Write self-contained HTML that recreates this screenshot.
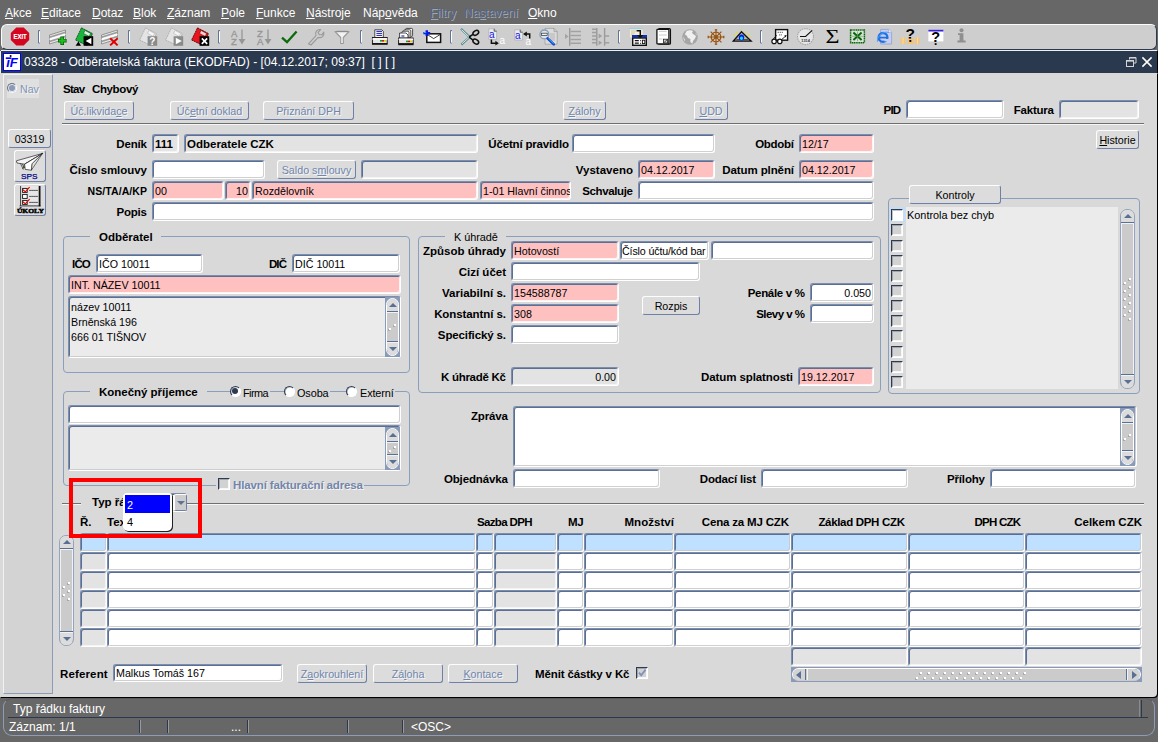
<!DOCTYPE html><html lang="cs"><head><meta charset="utf-8"><title>03328 - Odběratelská faktura</title><style>
html,body{margin:0;padding:0}
body{width:1158px;height:742px;overflow:hidden;background:#676767;position:relative;
 font-family:"Liberation Sans",Arial,sans-serif;font-size:12px;color:#000}
div,span{box-sizing:border-box}
.a{position:absolute;white-space:nowrap}
.menu{top:6px;font-size:12px;color:#fff;line-height:15px}
.menu u{text-decoration-thickness:1px;text-underline-offset:1px}
.menu.dis{color:#52648a;text-shadow:1px 1px 0 #a6a6a6}
.tb{left:1px;top:24px;width:1156px;height:26px;background:#cecece;border-radius:6px;border:1px solid;border-color:#fcfcfc #2b394f #2b394f #fcfcfc}
.sep{width:2px;height:13px;top:31px;border-left:1px solid #7d8fb3;border-right:1px solid #fff}
.title{left:1px;top:51px;width:1156px;height:22px;background:#2b394f;box-shadow:1px 0 0 #000, 0 -1px 0 #f0f0f0, -1px 0 0 #f0f0f0}
.ttext{left:24px;top:55px;color:#fff;font-size:12.1px;line-height:15px}
.win{left:0;top:73px;width:1157px;height:624px;background:#d9d9d9;box-shadow:1px 1px 0 #000;border-radius:0 0 4px 0}
.side{left:3px;top:74px;width:50px;height:620px;background:#d3d3d3;border-left:1px solid #f2f2f2;border-top:1px solid #f2f2f2;border-right:1px solid #8c9bb8;border-bottom:1px solid #8c9bb8}
.f{height:19px;border:1px solid;border-color:#7c8dad #fff #fff #7c8dad;border-radius:3px;
 box-shadow:inset 1px 1px 0 #5a6f94, inset -1px -1px 0 rgba(200,200,200,.85);font-size:10.7px;line-height:18px;padding:0 2px 0 2px;overflow:hidden;background:#fff}
.f.p{background:#ffc0c0;box-shadow:inset 1px 1px 0 #5a6f94, inset -1px -1px 0 rgba(255,255,255,.8)}
.f.g{background:#e3e3e3;box-shadow:inset 1px 1px 0 #5a6f94, inset -1px -1px 0 rgba(255,255,255,.6)}
.f.b{font-weight:bold;font-size:11.5px}
.f.r{text-align:right;padding-right:2px}
.f.cl{padding-left:1px;letter-spacing:-.15px}
.ta{border:1px solid;border-color:#7c8dad #fff #fff #7c8dad;border-radius:3px;
 box-shadow:inset 1px 1px 0 #5a6f94, inset -1px -1px 0 rgba(200,200,200,.85);font-size:10.7px;line-height:15px;padding:3px 2px 0 2px;overflow:hidden;background:#ebebeb}
.l{font-weight:bold;font-size:11.5px;line-height:14px}
.lr{text-align:right}
.btn{height:18px;border:1px solid;border-color:#fdfdfd #6e80a5 #6e80a5 #fdfdfd;border-radius:3px;background:#dcdcdc;
 font-size:10.7px;line-height:16px;text-align:center;color:#000}
.btn{padding-top:1px}
.btn.dis{color:#7086ad;text-shadow:1px 1px 0 #f6f6f6}
.grp{border:1px solid #8a9ebd;border-radius:4px}
.leg{background:#d9d9d9;line-height:15px;padding:0 8px}
.hl{height:2px;border-top:1px solid #6f6f6f;border-bottom:1px solid #f6f6f6}
.cb{width:12px;height:12px;border:1px solid;border-color:#2d3a52 #fff #fff #2d3a52;box-shadow:inset 1px 1px 0 rgba(45,58,82,.3), inset -1px -1px 0 rgba(255,255,255,.8);background:#d2d2d2}
.radio{width:11px;height:11px;border-radius:50%;border:1px solid;border-color:#2d3a52 #fff #fff #2d3a52;background:#fff;box-shadow:inset .5px .5px 0 rgba(45,58,82,.45)}
.sb{background:#cacaca;border-radius:7px;border:1px solid #8c9bb8}
.sbb{width:14px;height:14px;border-radius:7px;border:1px solid #8c9bb8;background:#e2e2e2;left:-1px}
.tri{width:0;height:0;border-left:4px solid transparent;border-right:4px solid transparent}
.st{color:#fff;font-size:12px;line-height:14px}
</style></head><body>
<div class="a menu " style="left:5px"><u>A</u>kce</div>
<div class="a menu " style="left:41px"><u>E</u>ditace</div>
<div class="a menu " style="left:92px"><u>D</u>otaz</div>
<div class="a menu " style="left:133px"><u>B</u>lok</div>
<div class="a menu " style="left:167px"><u>Z</u>áznam</div>
<div class="a menu " style="left:221px"><u>P</u>ole</div>
<div class="a menu " style="left:256px"><u>F</u>unkce</div>
<div class="a menu " style="left:306px"><u>N</u>ástroje</div>
<div class="a menu " style="left:363px">Náp<u>o</u>věda</div>
<div class="a menu dis" style="left:430px"><u>F</u>iltry</div>
<div class="a menu dis" style="left:464px">Na<u>s</u>tavení</div>
<div class="a menu " style="left:528px"><u>O</u>kno</div>
<div class="a tb"></div>
<svg class="a" style="left:0;top:24px" width="1158" height="26" viewBox="0 24 1158 26"><polygon points="16.3,27.6 23.7,27.6 29.2,33.1 29.2,40.1 23.7,45.5 16.3,45.5 10.8,40.1 10.8,33.1" fill="#d4061f"/><text x="20.1" y="39.1" font-size="6.8" font-weight="bold" fill="#fff" stroke="#fff" stroke-width="0.15" text-anchor="middle" font-family="Liberation Sans,Arial,sans-serif" textLength="13.4" lengthAdjust="spacingAndGlyphs">EXIT</text><path d="M40,30.5 H38.5 V43 H40" fill="none" stroke="#5f7499" stroke-width="1"/><path d="M39.5,31.5 V42.5" stroke="#fff" stroke-width="1"/><g transform="translate(49,27)"><polygon points="0.5,8 16.5,3 16.5,12 0.5,17" fill="#e9e9e9" stroke="#8a8a8a" stroke-width="0.9"/><path d="M0.5,10.2 L16.5,5.2 M0.5,14.6 L16.5,9.6" stroke="#9a9a9a" stroke-width="1.6" fill="none"/><path d="M0.5,12.4 L16.5,7.4" stroke="#fff" stroke-width="1.4" fill="none"/><path d="M13.2,9.5 V18 M9,13.7 H17.6" stroke="#0a5a0a" stroke-width="3.6"/><path d="M13.2,10.2 V17.3 M9.7,13.7 H16.9" stroke="#19c119" stroke-width="2.2"/></g><g transform="translate(75,27)"><polygon points="6.5,0.8 17.5,6.6 12,18.5 0.6,13" fill="#19b43c" stroke="#0a3d14" stroke-width="0.8" stroke-dasharray="2 0.6"/><polygon points="10,3.4 15.6,6.4 14.2,9.4 8.6,6.4" fill="#d9f2dd" stroke="#0a3d14" stroke-width="0.5"/><rect x="8.6" y="9.2" width="9.6" height="9.6" fill="#000"/><polygon points="16.4,10.8 16.4,17.2 10.6,14" fill="#fff"/><polygon points="0.6,18.8 3.4,14.4 6,18.8" fill="#000"/></g><g transform="translate(101,27)"><polygon points="0.5,8 16.5,3 16.5,12 0.5,17" fill="#e9e9e9" stroke="#8a8a8a" stroke-width="0.9"/><path d="M0.5,10.2 L16.5,5.2 M0.5,14.6 L16.5,9.6" stroke="#9a9a9a" stroke-width="1.6" fill="none"/><path d="M0.5,12.4 L16.5,7.4" stroke="#fff" stroke-width="1.4" fill="none"/><path d="M9.2,11.2 L16.6,18.4 M16.6,11.2 L9.2,18.4" stroke="#e00000" stroke-width="2"/></g><path d="M130,30.5 H128.5 V43 H130" fill="none" stroke="#5f7499" stroke-width="1"/><path d="M129.5,31.5 V42.5" stroke="#fff" stroke-width="1"/><g transform="translate(139,27)"><polygon points="6.5,0.8 17.5,6.6 12,18.5 0.6,13" fill="#e4e4e4" stroke="#a8a8a8" stroke-width="0.8" stroke-dasharray="2 0.6"/><polygon points="10,3.4 15.6,6.4 14.2,9.4 8.6,6.4" fill="#f6f6f6" stroke="#a8a8a8" stroke-width="0.5"/><rect x="8.6" y="9.2" width="9.6" height="9.6" fill="#8a8a8a"/><text x="13.4" y="17.7" font-size="10" font-weight="bold" fill="#fff" text-anchor="middle" font-family="Liberation Sans,Arial,sans-serif">?</text></g><g transform="translate(165,27)"><polygon points="6.5,0.8 17.5,6.6 12,18.5 0.6,13" fill="#e4e4e4" stroke="#a8a8a8" stroke-width="0.8" stroke-dasharray="2 0.6"/><polygon points="10,3.4 15.6,6.4 14.2,9.4 8.6,6.4" fill="#f6f6f6" stroke="#a8a8a8" stroke-width="0.5"/><rect x="8.6" y="9.2" width="9.6" height="9.6" fill="#8a8a8a"/><polygon points="10.8,10.8 10.8,17.2 16.8,14" fill="#fff"/></g><g transform="translate(191,27)"><polygon points="6.5,0.8 17.5,6.6 12,18.5 0.6,13" fill="#e8141e" stroke="#4a0000" stroke-width="0.8" stroke-dasharray="2 0.6"/><polygon points="10,3.4 15.6,6.4 14.2,9.4 8.6,6.4" fill="#f6d0d0" stroke="#4a0000" stroke-width="0.5"/><rect x="8.6" y="9.2" width="9.6" height="9.6" fill="#000"/><path d="M10.8,11.4 L16.2,16.8 M16.2,11.4 L10.8,16.8" stroke="#fff" stroke-width="1.7"/></g><path d="M220,30.5 H218.5 V43 H220" fill="none" stroke="#5f7499" stroke-width="1"/><path d="M219.5,31.5 V42.5" stroke="#fff" stroke-width="1"/><g transform="translate(231,27)"><text x="0" y="9.8" font-size="9.6" fill="#969696" stroke="#969696" stroke-width="0.3" font-family="Liberation Sans,Arial,sans-serif">A</text><text x="0" y="17.8" font-size="9.6" fill="#969696" stroke="#969696" stroke-width="0.3" font-family="Liberation Sans,Arial,sans-serif">Z</text><path d="M11,2.6 V15" stroke="#969696" stroke-width="1.3"/><polygon points="7.6,12 14.4,12 11,17.6" fill="#969696"/></g><g transform="translate(257,27)"><text x="0" y="9.8" font-size="9.6" fill="#969696" stroke="#969696" stroke-width="0.3" font-family="Liberation Sans,Arial,sans-serif">Z</text><text x="0" y="17.8" font-size="9.6" fill="#969696" stroke="#969696" stroke-width="0.3" font-family="Liberation Sans,Arial,sans-serif">A</text><path d="M11,2.6 V15" stroke="#969696" stroke-width="1.3"/><polygon points="7.6,12 14.4,12 11,17.6" fill="#969696"/></g><path d="M282,37.6 L287,42.2 L296.6,31.4" stroke="#0b6b0b" stroke-width="2.3" fill="none"/><path d="M308.5,43.8 L316,35.6 C314.6,32.2 317,29.2 320.6,29.6 L318,32.4 L319.2,34.6 L321.8,34.8 L323.8,32.2 C324.6,36 321.4,38.4 318.2,37.4 L311,45 Z" fill="none" stroke="#9a9a9a" stroke-width="1.1" stroke-linejoin="round"/><path d="M335,31.5 H349 L343.3,37.5 V43.5 L340.7,43.5 V37.5 Z" fill="#f2f2f2" stroke="#9a9a9a" stroke-width="1.1" stroke-linejoin="round"/><path d="M336.5,31.5 H347.5" stroke="#8a8a8a" stroke-width="1.4"/><path d="M362,30.5 H360.5 V43 H362" fill="none" stroke="#5f7499" stroke-width="1"/><path d="M361.5,31.5 V42.5" stroke="#fff" stroke-width="1"/><g transform="translate(371,0)"><polygon points="3.8,29.8 10.8,29.8 12.3,31.3 12.3,37.5 3.8,37.5" fill="#fff" stroke="#222" stroke-width="0.8"/><path d="M5.4,31.4 H11 M5.4,33.4 H11 M5.4,35.4 H11" stroke="#1c1cb0" stroke-width="1"/><rect x="1.4" y="37.5" width="14.8" height="6" fill="#e6e6e6" stroke="#111" stroke-width="0.9"/><path d="M1.4,39 H16.2" stroke="#fafafa" stroke-width="1.6"/><rect x="9" y="40" width="2" height="1.6" fill="#19a319"/><rect x="11" y="40" width="2" height="1.6" fill="#d81414"/><rect x="13" y="40" width="2" height="1.6" fill="#e8d000"/><rect x="1" y="43.3" width="15.6" height="1.5" fill="#111"/></g><g transform="translate(397,0)"><rect x="8.6" y="28.4" width="7" height="8" rx="1" fill="#fff" stroke="#222" stroke-width="0.8"/><rect x="6.8" y="29.8" width="7" height="8" rx="1" fill="#fff" stroke="#222" stroke-width="0.8"/><rect x="5" y="31.2" width="7" height="7" rx="1" fill="#fff" stroke="#222" stroke-width="0.8"/><polygon points="2.6,33 9,33 11,35 11,38.2 2.6,38.2" fill="#fff" stroke="#222" stroke-width="0.8"/><path d="M4.4,36 H7.4" stroke="#1c1cb0" stroke-width="1.1"/><rect x="1.6" y="38" width="14.6" height="5.6" fill="#e6e6e6" stroke="#111" stroke-width="0.9"/><path d="M1.6,39.4 H16.2" stroke="#fafafa" stroke-width="1.4"/><rect x="9" y="40.6" width="2" height="1.6" fill="#19a319"/><rect x="11" y="40.6" width="2" height="1.6" fill="#d81414"/><rect x="13" y="40.6" width="2" height="1.6" fill="#e8d000"/><rect x="1.2" y="43.6" width="15.4" height="1.6" fill="#111"/></g><rect x="426.8" y="33.8" width="13.8" height="8.6" fill="#fff" stroke="#111" stroke-width="1.5"/><path d="M427.4,34.6 L433.7,38.6 L440,34.6" fill="none" stroke="#111" stroke-width="0.8"/><path d="M426.8,30.2 V36 M423.4,33.1 H430.2" stroke="#0a18e0" stroke-width="2.4"/><path d="M424,32.6 H426.2" stroke="#2ad0ff" stroke-width="0.9"/><path d="M452,30.5 H450.5 V43 H452" fill="none" stroke="#5f7499" stroke-width="1"/><path d="M451.5,31.5 V42.5" stroke="#fff" stroke-width="1"/><path d="M461,28.8 L469.6,37 L461.4,44.6" fill="none" stroke="#5a8a90" stroke-width="2.2" stroke-linejoin="miter"/><path d="M461.6,29.6 L469,36.8 M462,43.8 L469,37.4" stroke="#dff2f2" stroke-width="0.9"/><path d="M469,37 L473,34.4 M469,37 L473,40.2" stroke="#111" stroke-width="1.5"/><ellipse cx="475.8" cy="32.8" rx="3.1" ry="2.1" transform="rotate(-32 475.8 32.8)" fill="none" stroke="#111" stroke-width="1.5"/><ellipse cx="475.8" cy="41.6" rx="3.1" ry="2.1" transform="rotate(32 475.8 41.6)" fill="none" stroke="#111" stroke-width="1.5"/><polygon points="488.8,28.8 494.2,28.8 496.6,31.2 496.6,39.4 488.8,39.4" fill="#ececec" stroke="#9a9a9a" stroke-width="0.5"/><path d="M494.2,28.8 V31.2 H496.6" fill="none" stroke="#222" stroke-width="0.7"/><text x="488.9" y="38" font-size="10" fill="#1414f0" font-family="Liberation Sans,Arial,sans-serif">a</text><text x="499.4" y="44.4" font-size="10" fill="#fff" font-family="Liberation Sans,Arial,sans-serif">a</text><path d="M491.4,39.6 V43.2 H496" stroke="#111" stroke-width="1.5" fill="none"/><polygon points="495.4,40.8 498.8,43.2 495.4,45.6" fill="#111"/><polygon points="514.8,29.8 520.2,29.8 522.6,32.2 522.6,40 514.8,40" fill="#ececec" stroke="#9a9a9a" stroke-width="0.5"/><path d="M520.2,29.8 V32.2 H522.6" fill="none" stroke="#222" stroke-width="0.7"/><text x="514.9" y="38.6" font-size="10" fill="#1414f0" font-family="Liberation Sans,Arial,sans-serif">a</text><text x="525.4" y="45.4" font-size="10" fill="#fff" font-family="Liberation Sans,Arial,sans-serif">a</text><path d="M529.7,38.6 V33.9 H526" stroke="#111" stroke-width="1.5" fill="none"/><polygon points="526.8,31.4 523,33.9 526.8,36.4" fill="#111"/><polygon points="545,28.4 554,28.4 557.2,31.6 557.2,44.2 545,44.2" fill="#dcdcdc" stroke="#9a9a9a" stroke-width="0.7"/><path d="M554,28.4 V31.6 H557.2" fill="none" stroke="#8a8a8a" stroke-width="0.6"/><rect x="550" y="33" width="5" height="8" fill="#c8c8c8"/><circle cx="544.4" cy="34.4" r="4.4" fill="#d6e6f0" stroke="#8a9cb4" stroke-width="1.3"/><rect x="541.4" y="33.2" width="5.8" height="2.3" fill="#f0f0f0" stroke="#333" stroke-width="0.7"/><path d="M547.6,38.4 L553.8,44.4" stroke="#1e48d0" stroke-width="2.7" stroke-linecap="round"/><path d="M548.4,38.6 L553.6,43.6" stroke="#14c0ff" stroke-width="0.9"/><polygon points="565,33.8 565,39 568.6,36.4" fill="#a4a4a4"/><path d="M569.7,28 V45.8" stroke="#9a9a9a" stroke-width="1.4"/><path d="M570.6,31.4 H581 M570.6,35.4 H581 M570.6,39.5 H581 M570.6,43.2 H581" stroke="#a2a2a2" stroke-width="1.5"/><path d="M592,29.3 H596.6 M592,32.4 H596.6 M592,36 H596.6 M592,39.5 H596.6 M592,42.8 H596.6" stroke="#a0a0a0" stroke-width="1.5"/><path d="M596.8,28 V45.8 M604.6,28 V45.8" stroke="#9a9a9a" stroke-width="1.4"/><polygon points="598.6,33.6 598.6,38.4 602.2,36" fill="#a0a0a0"/><polygon points="598.6,40.4 598.6,45.2 602.2,42.8" fill="#a0a0a0"/><path d="M604.6,36 H609.2 M604.6,42.8 H609.2" stroke="#a0a0a0" stroke-width="1.5"/><path d="M620,30.5 H618.5 V43 H620" fill="none" stroke="#5f7499" stroke-width="1"/><path d="M619.5,31.5 V42.5" stroke="#fff" stroke-width="1"/><path d="M629.4,28.4 H642.8" stroke="#8ad4f4" stroke-width="1"/><rect x="630" y="29.4" width="12.6" height="8" fill="#f6eedd"/><path d="M631,31 H636 M631,33 H635 M631,35 H634" stroke="#d8b880" stroke-width="0.8"/><rect x="632" y="35" width="15" height="2.6" fill="#0a30c8"/><path d="M636.6,30.8 H640.3 V35.4" stroke="#111" stroke-width="1.5" fill="none"/><polygon points="637.2,35 643.4,35 640.3,38.4" fill="#111"/><rect x="632.7" y="38" width="13.6" height="7.3" fill="#fff" stroke="#111" stroke-width="1.4"/><path d="M634.8,40.6 H638.8 M634.8,43.2 H638.8" stroke="#111" stroke-width="1.3"/><path d="M640.6,40.2 V41.2 M640.6,42.8 V43.8" stroke="#111" stroke-width="1"/><rect x="642.4" y="40.2" width="2.4" height="3.4" fill="none" stroke="#111" stroke-width="0.9"/><rect x="658.4" y="28.6" width="12" height="15.6" rx="1" fill="#fff" stroke="#111" stroke-width="1.3"/><rect x="656.9" y="29.3" width="12" height="14.6" rx="0.6" fill="#fff" stroke="#111" stroke-width="1.3"/><path d="M659,31.4 H666.6 M659,35 H666.6 M659,39 H662.4" stroke="#c4c4c4" stroke-width="0.9"/><rect x="663.4" y="39.2" width="4.2" height="3.8" fill="#d4d4d4" stroke="#222" stroke-width="0.8"/><path d="M664.2,42.4 L667,39.8" stroke="#222" stroke-width="0.8"/><circle cx="690" cy="37" r="7.8" fill="#a6a6a6"/><path d="M686.6,31 C688.4,30 691.8,30 693,31.2 L692,33 L693.8,34.6 L696,36 L695,38.6 L693,41 L692.4,43.6 L690.4,42 L690.4,39 L688,38 L686.6,35.6 L684.8,34.6 Z" fill="#f0f0f0"/><path d="M683,36.6 L685,39.6 L684.4,41.4 Z M695.6,32.6 L697,35 L695.8,34.6 Z" fill="#e4e4e4"/><g stroke="#9a520c" fill="none"><circle cx="716" cy="37" r="4.8" stroke-width="1.3"/><circle cx="716" cy="37" r="1.3" stroke-width="1"/><path d="M716,29.6 V44.4 M708,37 H724 M710.6,31.6 L721.4,42.4 M721.4,31.6 L710.6,42.4" stroke-width="1.1"/><path d="M714.8,29.8 H717.2 M714.8,44.2 H717.2 M708.2,35.8 V38.2 M723.8,35.8 V38.2" stroke-width="1.2"/></g><path d="M741.5,29.4 V30.8 M736.4,31.8 L737.6,33 M746.6,31.8 L745.4,33 M733.6,34 L735,35 M749.4,34.6 L748,35.6 M750.6,37 L749.6,37.6" stroke="#e8e000" stroke-width="1.1"/><polygon points="741.5,31.8 751.2,41.2 733.2,41.2" fill="#b4b4b4" stroke="#111" stroke-width="1.3" stroke-linejoin="miter"/><polygon points="735,40.7 749.4,40.7 747.6,39 736.8,39" fill="#505050"/><ellipse cx="741.5" cy="37.6" rx="2.7" ry="3" fill="#0a20e8"/><ellipse cx="741.5" cy="38.2" rx="1.5" ry="1.7" fill="#14e0ff"/><path d="M762,30.5 H760.5 V43 H762" fill="none" stroke="#5f7499" stroke-width="1"/><path d="M761.5,31.5 V42.5" stroke="#fff" stroke-width="1"/><rect x="775.6" y="29.6" width="12" height="10.6" fill="#fff" stroke="#111" stroke-width="1.4"/><path d="M777.6,32.3 H783 M779,34.9 H782" stroke="#555" stroke-width="0.9" stroke-dasharray="1.4 0.7"/><path d="M781.8,39.4 L785.8,36" stroke="#111" stroke-width="0.9"/><polygon points="786.6,35 784.2,35.6 785.8,37.4" fill="#111"/><circle cx="774.1" cy="41.4" r="2.2" fill="#fff" stroke="#111" stroke-width="1.2"/><circle cx="779.8" cy="41.4" r="2.2" fill="#fff" stroke="#111" stroke-width="1.2"/><path d="M776.2,40.6 Q777,39.8 777.7,40.6 M773,39.4 L776.6,35.4" stroke="#111" stroke-width="1" fill="none"/><circle cx="805.5" cy="36.6" r="8" fill="#e6e6e6" stroke="#a6a6a6" stroke-width="1.1" stroke-dasharray="1.6 0.8"/><path d="M800,36.5 H805.6 L812.2,30.4" stroke="#111" stroke-width="1.1" fill="none"/><text x="805.6" y="42" font-size="4.4" fill="#333" text-anchor="middle" font-weight="bold" font-family="Liberation Sans,Arial,sans-serif" textLength="8.6" lengthAdjust="spacingAndGlyphs">1314</text><text x="825.4" y="43.4" font-size="19" fill="#000" font-family="Liberation Serif,serif" textLength="14" lengthAdjust="spacingAndGlyphs">Σ</text><rect x="850.6" y="29.9" width="13.8" height="12.8" fill="#d8e4d8" stroke="#0a640a" stroke-width="1.5" stroke-dasharray="1.3 0.5"/><path d="M853.4,32.6 L861.6,40 M861.6,32.6 L853.4,40" stroke="#0a640a" stroke-width="2"/><path d="M852,36.3 H863 M857.5,31.4 V41.2" stroke="#5f9a5f" stroke-width="0.6"/><polygon points="880.6,29.4 888.6,29.4 891.6,32.4 891.6,44 880.6,44" fill="#c6cff0" stroke="#8f9fd0" stroke-width="0.8"/><path d="M888.6,29.4 V32.4 H891.6" fill="#eef0fa" stroke="#8f9fd0" stroke-width="0.6"/><circle cx="883" cy="37.4" r="4.4" fill="none" stroke="#1e6fe0" stroke-width="2.3"/><path d="M879.2,37.6 H887" stroke="#1e6fe0" stroke-width="1.7"/><path d="M884.4,40.2 H888.8" stroke="#c6cff0" stroke-width="2.4"/><path d="M877.4,41.8 C876.4,36 884,30.4 888.8,32.6" stroke="#49a0ff" stroke-width="1" fill="none"/><text x="910.3" y="39.4" font-size="15.5" font-weight="bold" fill="#000" text-anchor="middle" font-family="Liberation Sans,Arial,sans-serif">?</text><rect x="900.8" y="37.2" width="4.7" height="6.8" fill="#f5c476"/><rect x="907.6" y="38.6" width="6.2" height="5.4" fill="#f5c476"/><rect x="915.2" y="37.2" width="4.2" height="6.8" fill="#f5c476"/><rect x="909.4" y="40" width="1.9" height="1.9" fill="#000"/><path d="M903,37.2 V44 M917.4,37.2 V44" stroke="#fbe3b8" stroke-width="0.8"/><rect x="928.4" y="30" width="15" height="11.4" fill="#fff"/><rect x="928.4" y="29.8" width="15" height="1.7" fill="#3a1ee0"/><text x="935.6" y="41.6" font-size="14.5" font-weight="bold" fill="#000" text-anchor="middle" font-family="Liberation Sans,Arial,sans-serif">?</text><rect x="934.7" y="43.2" width="1.9" height="1.7" fill="#000"/><circle cx="961.5" cy="30.3" r="2" fill="#8f8f8f"/><path d="M958,33.2 H963.4 V40.6 H965.6 V42.6 H957.4 V40.6 H959.6 V35 H958 Z" fill="#8f8f8f"/></svg>
<div class="a title"></div>
<div class="a" style="left:3px;top:53px;width:18px;height:18px;background:#fff;border:1px solid #0000ff"></div>
<svg class="a" style="left:3px;top:53px" width="18" height="18" viewBox="0 0 18 18"><text x="3.2" y="13.6" font-size="13.5" font-weight="bold" font-style="italic" fill="#0000ff" font-family="Liberation Sans,Arial,sans-serif" textLength="11.6" lengthAdjust="spacingAndGlyphs">ıF</text><path d="M2.8,5.2 H8.4" stroke="#0000ff" stroke-width="1.7"/><circle cx="7.6" cy="2.9" r="1" fill="#000"/></svg>
<svg class="a" style="left:1125px;top:56px" width="14" height="13" viewBox="0 0 14 13"><path d="M4.5,3.5 V1.5 H11 V7 H8.5" fill="none" stroke="#d4d4d4" stroke-width="1"/><path d="M4.5,1.8 H11" stroke="#d4d4d4" stroke-width="1.5"/><rect x="1.5" y="4.5" width="7" height="6" fill="none" stroke="#d4d4d4" stroke-width="1"/><path d="M1.5,4.9 H8.5" stroke="#d4d4d4" stroke-width="1.5"/></svg>
<svg class="a" style="left:1140px;top:55px" width="14" height="14" viewBox="0 0 14 14"><path d="M2.4,2.4 L11.6,11.6 M11.6,2.4 L2.4,11.6" stroke="#fff" stroke-width="1.5"/></svg>
<div class="a ttext">03328 - Odběratelská faktura (EKODFAD) - [04.12.2017; 09:37]&nbsp; [ ] [ ]</div>
<div class="a win"></div>
<div class="a side"></div>
<div class="a" style="left:7px;top:79px;width:32px;height:19px;background:#e0e0e0"></div>
<div class="a" style="left:7px;top:83px;width:10px;height:10px;border-radius:50%;background:#8a9bb9;border:1px solid;border-color:#7a7a7a #fff #fff #7a7a7a;box-shadow:inset 0 0 0 1px #dfe4ee"></div>
<div class="a" style="left:20px;top:82px;font-size:10.6px;line-height:14px;color:#8193b5;text-shadow:1px 1px 0 #f6f6f6">Nav</div>
<div class="a btn " style="left:8px;top:129px;width:43px;height:19px;line-height:17px;">03319</div>
<div class="a btn" style="left:14px;top:150px;width:32px;height:32px"></div>
<div class="a btn" style="left:14px;top:184px;width:32px;height:32px"></div>
<svg class="a" style="left:0;top:146px" width="60" height="74" viewBox="0 146 60 74"><polygon points="42.6,153.4 16.4,160.8 17,163 24.6,164.2" fill="#f4f4f4" stroke="#222" stroke-width="0.7" stroke-linejoin="round"/><polygon points="42.6,153.4 24.6,164.2 22.6,168.6 24.4,167.4" fill="#9a9a9a" stroke="#222" stroke-width="0.6" stroke-linejoin="round"/><polygon points="42.6,153.4 24.6,164.2 25.2,169.4 31.4,170.2 32.2,163.6" fill="#fff" stroke="#222" stroke-width="0.7" stroke-linejoin="round"/><polygon points="42.6,153.4 32.2,163.6 31.4,170.2" fill="#e2e2e2" stroke="#222" stroke-width="0.6" stroke-linejoin="round"/><path d="M20.4,163.4 L23.4,169.6 M22.2,163.8 L24.4,168" stroke="#333" stroke-width="0.7"/><text x="29.2" y="178.5" font-size="7.6" fill="#00008b" stroke="#00008b" stroke-width="0.25" text-anchor="middle" font-family="Liberation Sans,Arial,sans-serif" textLength="16.4" lengthAdjust="spacingAndGlyphs">SPS</text><rect x="20.6" y="186" width="19" height="19.8" fill="#e6e6e6"/><path d="M20.6,186 V205.8 M19.6,205.9 H40.6" stroke="#111" stroke-width="0.8"/><path d="M39.6,186 V206.3" stroke="#111" stroke-width="1.8"/><rect x="22.6" y="188.4" width="4.6" height="4" fill="#fff" stroke="#111" stroke-width="0.9"/><path d="M29.4,190.4 H38" stroke="#111" stroke-width="1" stroke-dasharray="1.3 0.7"/><rect x="22.6" y="194.4" width="4.6" height="4" fill="#fff" stroke="#111" stroke-width="0.9"/><path d="M29.4,196.4 H38" stroke="#111" stroke-width="1" stroke-dasharray="1.3 0.7"/><rect x="22.6" y="200.4" width="4.6" height="4" fill="#fff" stroke="#111" stroke-width="0.9"/><path d="M29.4,202.4 H38" stroke="#111" stroke-width="1" stroke-dasharray="1.3 0.7"/><path d="M22.8,189.8 L25.4,191.8 L29.6,187.2" fill="none" stroke="#e60000" stroke-width="1.2"/><path d="M22.8,201.8 L25.4,203.8 L29.6,199.2" fill="none" stroke="#e60000" stroke-width="1.2"/><text x="30.4" y="213" font-size="7" fill="#000" stroke="#000" stroke-width="0.45" text-anchor="middle" font-weight="bold" font-family="Liberation Serif,serif" textLength="27" lengthAdjust="spacingAndGlyphs">ÚKOLY</text></svg>
<div class="a l" style="left:63px;top:82px;letter-spacing:-0.698px;">Stav</div>
<div class="a l" style="left:92px;top:82px;letter-spacing:-0.367px;">Chybový</div>
<div class="a btn dis" style="left:64px;top:101px;width:70px;height:19px;line-height:17px;">Úč.likvida<u>c</u>e</div>
<div class="a btn dis" style="left:170px;top:101px;width:79px;height:19px;line-height:17px;">Úč<u>e</u>tní doklad</div>
<div class="a btn dis" style="left:263px;top:101px;width:91px;height:19px;line-height:17px;">Přiznání DPH</div>
<div class="a btn dis" style="left:563px;top:101px;width:43px;height:19px;line-height:17px;"><u>Z</u>álohy</div>
<div class="a btn dis" style="left:694px;top:101px;width:34px;height:19px;line-height:17px;"><u>U</u>DD</div>
<div class="a l lr" style="right:257.89px;top:103px;letter-spacing:-0.89px;">PID</div>
<div class="a f " style="left:906px;top:100px;width:98px;height:19px;"></div>
<div class="a l lr" style="right:104.22px;top:103px;letter-spacing:-0.22px;">Faktura</div>
<div class="a f g" style="left:1059px;top:100px;width:80px;height:19px;"></div>
<div class="a hl" style="left:62px;top:123px;width:1082px"></div>
<div class="a l lr" style="right:1011.16px;top:137px;letter-spacing:-0.163px;">Deník</div>
<div class="a f g b" style="left:152px;top:134px;width:27px;height:19px;">111</div>
<div class="a f g b" style="left:184px;top:134px;width:294px;height:19px;">Odberatele CZK</div>
<div class="a l lr" style="right:589.172px;top:137px;letter-spacing:-0.172px;">Účetní pravidlo</div>
<div class="a f " style="left:572px;top:134px;width:143px;height:19px;"></div>
<div class="a l lr" style="right:364.29px;top:137px;letter-spacing:-0.29px;">Období</div>
<div class="a f p" style="left:799px;top:134px;width:75px;height:19px;">12/17</div>
<div class="a btn " style="left:1096px;top:130px;width:43px;height:19px;line-height:17px;"><u>H</u>istorie</div>
<div class="a l lr" style="right:1011.04px;top:163px;letter-spacing:-0.036px;">Číslo smlouvy</div>
<div class="a f " style="left:152px;top:160px;width:113px;height:19px;"></div>
<div class="a btn dis" style="left:277px;top:160px;width:79px;height:19px;line-height:17px;">Saldo s<u>m</u>louvy</div>
<div class="a f g" style="left:361px;top:160px;width:117px;height:19px;"></div>
<div class="a l lr" style="right:524.978px;top:163px;letter-spacing:0.022px;">Vystaveno</div>
<div class="a f p" style="left:638px;top:160px;width:77px;height:19px;">04.12.2017</div>
<div class="a l lr" style="right:364.103px;top:163px;letter-spacing:-0.103px;">Datum plnění</div>
<div class="a f p" style="left:799px;top:160px;width:75px;height:19px;">04.12.2017</div>
<div class="a l lr" style="right:1010.91px;top:184px;letter-spacing:0.087px;font-size:10.5px;">NS/TA/A/KP</div>
<div class="a f p" style="left:152px;top:181px;width:72px;height:19px;">00</div>
<div class="a f p r" style="left:225px;top:181px;width:26px;height:19px;">10</div>
<div class="a f p" style="left:252px;top:181px;width:226px;height:19px;">Rozdělovník</div>
<div class="a f p" style="left:480px;top:181px;width:91px;height:19px;">1-01 Hlavní činnos</div>
<div class="a l lr" style="right:525.355px;top:184px;letter-spacing:-0.355px;">Schvaluje</div>
<div class="a f " style="left:638px;top:181px;width:236px;height:19px;"></div>
<div class="a l lr" style="right:1011.2px;top:205px;letter-spacing:-0.202px;">Popis</div>
<div class="a f " style="left:152px;top:202px;width:722px;height:19px;"></div>
<div class="a grp" style="left:888px;top:198px;width:252px;height:196px"></div>
<div class="a btn " style="left:909px;top:185px;width:92px;height:19px;line-height:17px;">Kontroly</div>
<div class="a" style="left:906px;top:207px;width:212px;height:182px;background:#ebebeb"></div>
<div class="a" style="left:890px;top:207px;width:16px;height:15px;background:#c5dcf7"></div>
<div class="a cb" style="left:891px;top:209px;background:#fff"></div>
<div class="a cb" style="left:891px;top:224px"></div>
<div class="a cb" style="left:891px;top:240px"></div>
<div class="a cb" style="left:891px;top:255px"></div>
<div class="a cb" style="left:891px;top:270px"></div>
<div class="a cb" style="left:891px;top:285px"></div>
<div class="a cb" style="left:891px;top:300px"></div>
<div class="a cb" style="left:891px;top:315px"></div>
<div class="a cb" style="left:891px;top:330px"></div>
<div class="a cb" style="left:891px;top:346px"></div>
<div class="a cb" style="left:891px;top:361px"></div>
<div class="a cb" style="left:891px;top:376px"></div>
<div class="a" style="left:907px;top:208px;font-size:10.9px;line-height:14px">Kontrola bez chyb</div>
<div class="a" style="left:1120px;top:209px;width:15px;height:180px;border:1px solid #93a3c0;border-radius:7px;background:#cbcbcb;overflow:hidden;box-shadow:inset 0 0 0 1px #f2f2f2;"><div class="a" style="left:0;top:0;width:13px;height:13px;background:#dcdcdc;border-bottom:1px solid #5a6f94"><div class="a tri" style="left:2.5px;top:4px;border-bottom:4px solid #5a6f94"></div></div><div class="a" style="left:0;top:13px;width:13px;height:1px;background:#f2f2f2"></div><div class="a" style="left:0;bottom:0;width:13px;height:13px;background:#dcdcdc;border-top:1px solid #f2f2f2;box-shadow:0 -1px 0 #5a6f94"><div class="a tri" style="left:2.5px;top:4px;border-top:4px solid #5a6f94"></div></div><div class="a" style="left:8px;top:68px;width:2px;height:2px;background:#fff;box-shadow:-1px 1px 0 #a9a9a9"></div><div class="a" style="left:3px;top:72px;width:2px;height:2px;background:#fff;box-shadow:-1px 1px 0 #a9a9a9"></div><div class="a" style="left:8px;top:76px;width:2px;height:2px;background:#fff;box-shadow:-1px 1px 0 #a9a9a9"></div><div class="a" style="left:3px;top:80px;width:2px;height:2px;background:#fff;box-shadow:-1px 1px 0 #a9a9a9"></div><div class="a" style="left:8px;top:84px;width:2px;height:2px;background:#fff;box-shadow:-1px 1px 0 #a9a9a9"></div><div class="a" style="left:3px;top:88px;width:2px;height:2px;background:#fff;box-shadow:-1px 1px 0 #a9a9a9"></div><div class="a" style="left:8px;top:92px;width:2px;height:2px;background:#fff;box-shadow:-1px 1px 0 #a9a9a9"></div><div class="a" style="left:3px;top:96px;width:2px;height:2px;background:#fff;box-shadow:-1px 1px 0 #a9a9a9"></div><div class="a" style="left:8px;top:100px;width:2px;height:2px;background:#fff;box-shadow:-1px 1px 0 #a9a9a9"></div><div class="a" style="left:3px;top:104px;width:2px;height:2px;background:#fff;box-shadow:-1px 1px 0 #a9a9a9"></div><div class="a" style="left:8px;top:108px;width:2px;height:2px;background:#fff;box-shadow:-1px 1px 0 #a9a9a9"></div></div>
<div class="a grp" style="left:63px;top:236px;width:347px;height:137px"></div>
<div class="a leg l" style="left:90px;top:230px;width:71px;padding:0 0 0 9px;letter-spacing:-0.009px;">Odběratel</div>
<div class="a l" style="left:72px;top:257px;letter-spacing:-0.815px;">IČO</div>
<div class="a f " style="left:96px;top:254px;width:107px;height:19px;">IČO 10011</div>
<div class="a l" style="left:269px;top:257px;letter-spacing:-0.935px;">DIČ</div>
<div class="a f " style="left:292px;top:254px;width:108px;height:19px;">DIČ 10011</div>
<div class="a f p" style="left:68px;top:275px;width:333px;height:19px;">INT. NÁZEV 10011</div>
<div class="a ta" style="left:68px;top:296px;width:333px;height:62px">název 10011<br>Brněnská 196<br>666 01 TIŠNOV</div>
<div class="a" style="left:385px;top:297px;width:15px;height:60px;background:#8a9bb9"></div><div class="a" style="left:386px;top:298px;width:13px;height:58px;border:1px solid #fff;border-radius:7px;background:#cbcbcb;overflow:hidden;"><div class="a" style="left:0;top:0;width:11px;height:13px;background:#dcdcdc;border-bottom:1px solid #5a6f94"><div class="a tri" style="left:1.5px;top:4px;border-bottom:4px solid #5a6f94"></div></div><div class="a" style="left:0;top:13px;width:11px;height:1px;background:#f2f2f2"></div><div class="a" style="left:0;bottom:0;width:11px;height:13px;background:#dcdcdc;border-top:1px solid #f2f2f2;box-shadow:0 -1px 0 #5a6f94"><div class="a tri" style="left:1.5px;top:4px;border-top:4px solid #5a6f94"></div></div><div class="a" style="left:7px;top:25px;width:2px;height:2px;background:#fff;box-shadow:-1px 1px 0 #a9a9a9"></div><div class="a" style="left:2px;top:29px;width:2px;height:2px;background:#fff;box-shadow:-1px 1px 0 #a9a9a9"></div></div>
<div class="a grp" style="left:418px;top:236px;width:463px;height:157px"></div>
<div class="a leg" style="left:445px;top:230px;width:61px;padding:0 0 0 9px;font-size:10.9px;letter-spacing:-0.055px;">K úhradě</div>
<div class="a l lr" style="right:652.004px;top:244px;letter-spacing:-0.004px;">Způsob úhrady</div>
<div class="a f p" style="left:511px;top:241px;width:108px;height:19px;">Hotovostí</div>
<div class="a f cl" style="left:620px;top:241px;width:89px;height:19px;">Číslo účtu/kód bar</div>
<div class="a f " style="left:711px;top:241px;width:163px;height:19px;"></div>
<div class="a l lr" style="right:651.999px;top:265px;letter-spacing:0.001px;">Cizí účet</div>
<div class="a f " style="left:511px;top:262px;width:189px;height:19px;"></div>
<div class="a l lr" style="right:651.994px;top:286px;letter-spacing:0.006px;">Variabilní s.</div>
<div class="a f p" style="left:511px;top:283px;width:108px;height:19px;">154588787</div>
<div class="a l lr" style="right:652.08px;top:307px;letter-spacing:-0.08px;">Konstantní s.</div>
<div class="a f p" style="left:511px;top:304px;width:108px;height:19px;">308</div>
<div class="a l lr" style="right:652.129px;top:328px;letter-spacing:-0.129px;">Specifický s.</div>
<div class="a f " style="left:511px;top:325px;width:108px;height:19px;"></div>
<div class="a btn " style="left:642px;top:296px;width:58px;height:19px;line-height:17px;">Rozpis</div>
<div class="a l lr" style="right:353.309px;top:286px;letter-spacing:-0.309px;">Penále v %</div>
<div class="a f r" style="left:810px;top:283px;width:64px;height:19px;">0.050</div>
<div class="a l lr" style="right:353.529px;top:307px;letter-spacing:-0.529px;">Slevy v %</div>
<div class="a f " style="left:810px;top:304px;width:64px;height:19px;"></div>
<div class="a l lr" style="right:652.267px;top:370px;letter-spacing:-0.267px;">K úhradě Kč</div>
<div class="a f g r" style="left:511px;top:367px;width:108px;height:19px;">0.00</div>
<div class="a l lr" style="right:365.081px;top:370px;letter-spacing:-0.081px;">Datum splatnosti</div>
<div class="a f p" style="left:798px;top:367px;width:76px;height:19px;">19.12.2017</div>
<div class="a grp" style="left:63px;top:391px;width:347px;height:95px"></div>
<div class="a leg l" style="left:90px;top:385px;width:117px;padding:0 0 0 9px;letter-spacing:-0.023px;">Konečný příjemce</div>
<div class="a" style="left:230px;top:386px;background:#d9d9d9;font-size:10.9px;line-height:14px;width:40px;height:13px"></div>
<div class="a" style="left:243px;top:386px;font-size:10.9px;line-height:14px;letter-spacing:-0.571px;">Firma</div>
<div class="a radio" style="left:230px;top:386px"></div>
<div class="a" style="left:231.9px;top:387.8px;width:6.6px;height:6.6px;border-radius:50%;background:#2d3a52"></div>
<div class="a" style="left:284px;top:386px;background:#d9d9d9;font-size:10.9px;line-height:14px;width:46px;height:13px"></div>
<div class="a" style="left:297px;top:386px;font-size:10.9px;line-height:14px;letter-spacing:-0.103px;">Osoba</div>
<div class="a radio" style="left:284px;top:386px"></div>
<div class="a" style="left:346px;top:386px;background:#d9d9d9;font-size:10.9px;line-height:14px;width:49px;height:13px"></div>
<div class="a" style="left:360px;top:386px;font-size:10.9px;line-height:14px;letter-spacing:-0.133px;">Externí</div>
<div class="a radio" style="left:346px;top:386px"></div>
<div class="a f " style="left:68px;top:405px;width:333px;height:19px;"></div>
<div class="a ta" style="left:68px;top:425px;width:333px;height:46px"></div>
<div class="a" style="left:385px;top:427px;width:15px;height:43px;background:#8a9bb9"></div><div class="a" style="left:386px;top:428px;width:13px;height:41px;border:1px solid #fff;border-radius:7px;background:#cbcbcb;overflow:hidden;"><div class="a" style="left:0;top:0;width:11px;height:13px;background:#dcdcdc;border-bottom:1px solid #5a6f94"><div class="a tri" style="left:1.5px;top:4px;border-bottom:4px solid #5a6f94"></div></div><div class="a" style="left:0;top:13px;width:11px;height:1px;background:#f2f2f2"></div><div class="a" style="left:0;bottom:0;width:11px;height:13px;background:#dcdcdc;border-top:1px solid #f2f2f2;box-shadow:0 -1px 0 #5a6f94"><div class="a tri" style="left:1.5px;top:4px;border-top:4px solid #5a6f94"></div></div><div class="a" style="left:7px;top:16.5px;width:2px;height:2px;background:#fff;box-shadow:-1px 1px 0 #a9a9a9"></div><div class="a" style="left:2px;top:20.5px;width:2px;height:2px;background:#fff;box-shadow:-1px 1px 0 #a9a9a9"></div></div>
<div class="a" style="left:216px;top:478px;background:#d9d9d9;width:148px;height:13px"></div>
<div class="a cb" style="left:218px;top:478px"></div>
<div class="a" style="left:233px;top:479px;font-size:11.5px;font-weight:bold;line-height:13px;color:#7386aa;text-shadow:1px 1px 0 #f6f6f6;letter-spacing:-0.131px;">Hlavní fakturační adresa</div>
<div class="a l lr" style="right:650.119px;top:409px;letter-spacing:-0.119px;">Zpráva</div>
<div class="a ta" style="left:513px;top:406px;width:624px;height:61px;background:#fff"></div>
<div class="a" style="left:1120px;top:408px;width:15px;height:58px;background:#8a9bb9"></div><div class="a" style="left:1121px;top:409px;width:13px;height:56px;border:1px solid #fff;border-radius:7px;background:#cbcbcb;overflow:hidden;"><div class="a" style="left:0;top:0;width:11px;height:13px;background:#dcdcdc;border-bottom:1px solid #5a6f94"><div class="a tri" style="left:1.5px;top:4px;border-bottom:4px solid #5a6f94"></div></div><div class="a" style="left:0;top:13px;width:11px;height:1px;background:#f2f2f2"></div><div class="a" style="left:0;bottom:0;width:11px;height:13px;background:#dcdcdc;border-top:1px solid #f2f2f2;box-shadow:0 -1px 0 #5a6f94"><div class="a tri" style="left:1.5px;top:4px;border-top:4px solid #5a6f94"></div></div><div class="a" style="left:7px;top:24px;width:2px;height:2px;background:#fff;box-shadow:-1px 1px 0 #a9a9a9"></div><div class="a" style="left:2px;top:28px;width:2px;height:2px;background:#fff;box-shadow:-1px 1px 0 #a9a9a9"></div></div>
<div class="a l lr" style="right:650.119px;top:472px;letter-spacing:-0.119px;">Objednávka</div>
<div class="a f " style="left:513px;top:469px;width:147px;height:19px;"></div>
<div class="a l lr" style="right:402.196px;top:472px;letter-spacing:-0.196px;">Dodací list</div>
<div class="a f " style="left:761px;top:469px;width:147px;height:19px;"></div>
<div class="a l lr" style="right:173.169px;top:472px;letter-spacing:-0.169px;">Přílohy</div>
<div class="a f " style="left:990px;top:469px;width:146px;height:19px;"></div>
<div class="a hl" style="left:62px;top:503px;width:1082px"></div>
<div class="a leg l" style="left:81px;top:495px;padding:0 0 0 11px;width:63px">Typ řádku</div>
<div class="a f " style="left:123px;top:493px;width:64px;height:19px;"></div>
<div class="a btn" style="left:174px;top:494px;width:13px;height:17px;border-radius:2px;background:#cdcdcd;padding:0"><div class="a tri" style="left:1.5px;top:6px;border-top:4px solid #5f7397"></div></div>
<div class="a l" style="left:80px;top:515px;">Ř.</div>
<div class="a l" style="left:107px;top:515px;">Text</div>
<div class="a l" style="left:477px;top:515px;letter-spacing:-0.657px;">Sazba DPH</div>
<div class="a l" style="left:568px;top:515px;letter-spacing:-0.238px;">MJ</div>
<div class="a l lr" style="right:483.95px;top:515px;letter-spacing:0.05px;">Množství</div>
<div class="a l lr" style="right:369.176px;top:515px;letter-spacing:-0.176px;">Cena za MJ CZK</div>
<div class="a l lr" style="right:253.317px;top:515px;letter-spacing:-0.317px;">Základ DPH CZK</div>
<div class="a l lr" style="right:137.759px;top:515px;letter-spacing:-0.759px;">DPH CZK</div>
<div class="a l lr" style="right:15.994px;top:515px;letter-spacing:0.006px;">Celkem CZK</div>
<div class="a f" style="left:80px;top:533px;width:27px;height:19px;background:#bfe0ff"></div>
<div class="a f" style="left:107px;top:533px;width:369px;height:19px;background:#bfe0ff"></div>
<div class="a f" style="left:476px;top:533px;width:18px;height:19px;background:#bfe0ff"></div>
<div class="a f" style="left:494px;top:533px;width:63px;height:19px;background:#bfe0ff"></div>
<div class="a f" style="left:557px;top:533px;width:27px;height:19px;background:#bfe0ff"></div>
<div class="a f" style="left:584px;top:533px;width:90px;height:19px;background:#bfe0ff"></div>
<div class="a f" style="left:674px;top:533px;width:117px;height:19px;background:#bfe0ff"></div>
<div class="a f" style="left:791px;top:533px;width:117px;height:19px;background:#bfe0ff"></div>
<div class="a f" style="left:908px;top:533px;width:117px;height:19px;background:#bfe0ff"></div>
<div class="a f" style="left:1025px;top:533px;width:117px;height:19px;background:#bfe0ff"></div>
<div class="a f g" style="left:80px;top:552px;width:27px;height:19px;"></div>
<div class="a f " style="left:107px;top:552px;width:369px;height:19px;"></div>
<div class="a f " style="left:476px;top:552px;width:18px;height:19px;"></div>
<div class="a f g" style="left:494px;top:552px;width:63px;height:19px;"></div>
<div class="a f " style="left:557px;top:552px;width:27px;height:19px;"></div>
<div class="a f " style="left:584px;top:552px;width:90px;height:19px;"></div>
<div class="a f " style="left:674px;top:552px;width:117px;height:19px;"></div>
<div class="a f " style="left:791px;top:552px;width:117px;height:19px;"></div>
<div class="a f " style="left:908px;top:552px;width:117px;height:19px;"></div>
<div class="a f " style="left:1025px;top:552px;width:117px;height:19px;"></div>
<div class="a f g" style="left:80px;top:571px;width:27px;height:19px;"></div>
<div class="a f " style="left:107px;top:571px;width:369px;height:19px;"></div>
<div class="a f " style="left:476px;top:571px;width:18px;height:19px;"></div>
<div class="a f g" style="left:494px;top:571px;width:63px;height:19px;"></div>
<div class="a f " style="left:557px;top:571px;width:27px;height:19px;"></div>
<div class="a f " style="left:584px;top:571px;width:90px;height:19px;"></div>
<div class="a f " style="left:674px;top:571px;width:117px;height:19px;"></div>
<div class="a f " style="left:791px;top:571px;width:117px;height:19px;"></div>
<div class="a f " style="left:908px;top:571px;width:117px;height:19px;"></div>
<div class="a f " style="left:1025px;top:571px;width:117px;height:19px;"></div>
<div class="a f g" style="left:80px;top:590px;width:27px;height:19px;"></div>
<div class="a f " style="left:107px;top:590px;width:369px;height:19px;"></div>
<div class="a f " style="left:476px;top:590px;width:18px;height:19px;"></div>
<div class="a f g" style="left:494px;top:590px;width:63px;height:19px;"></div>
<div class="a f " style="left:557px;top:590px;width:27px;height:19px;"></div>
<div class="a f " style="left:584px;top:590px;width:90px;height:19px;"></div>
<div class="a f " style="left:674px;top:590px;width:117px;height:19px;"></div>
<div class="a f " style="left:791px;top:590px;width:117px;height:19px;"></div>
<div class="a f " style="left:908px;top:590px;width:117px;height:19px;"></div>
<div class="a f " style="left:1025px;top:590px;width:117px;height:19px;"></div>
<div class="a f g" style="left:80px;top:609px;width:27px;height:19px;"></div>
<div class="a f " style="left:107px;top:609px;width:369px;height:19px;"></div>
<div class="a f " style="left:476px;top:609px;width:18px;height:19px;"></div>
<div class="a f g" style="left:494px;top:609px;width:63px;height:19px;"></div>
<div class="a f " style="left:557px;top:609px;width:27px;height:19px;"></div>
<div class="a f " style="left:584px;top:609px;width:90px;height:19px;"></div>
<div class="a f " style="left:674px;top:609px;width:117px;height:19px;"></div>
<div class="a f " style="left:791px;top:609px;width:117px;height:19px;"></div>
<div class="a f " style="left:908px;top:609px;width:117px;height:19px;"></div>
<div class="a f " style="left:1025px;top:609px;width:117px;height:19px;"></div>
<div class="a f g" style="left:80px;top:628px;width:27px;height:19px;"></div>
<div class="a f " style="left:107px;top:628px;width:369px;height:19px;"></div>
<div class="a f " style="left:476px;top:628px;width:18px;height:19px;"></div>
<div class="a f g" style="left:494px;top:628px;width:63px;height:19px;"></div>
<div class="a f " style="left:557px;top:628px;width:27px;height:19px;"></div>
<div class="a f " style="left:584px;top:628px;width:90px;height:19px;"></div>
<div class="a f " style="left:674px;top:628px;width:117px;height:19px;"></div>
<div class="a f " style="left:791px;top:628px;width:117px;height:19px;"></div>
<div class="a f " style="left:908px;top:628px;width:117px;height:19px;"></div>
<div class="a f " style="left:1025px;top:628px;width:117px;height:19px;"></div>
<div class="a f g" style="left:791px;top:647px;width:117px;height:19px;"></div>
<div class="a f g" style="left:908px;top:647px;width:117px;height:19px;"></div>
<div class="a f g" style="left:1025px;top:647px;width:117px;height:19px;"></div>
<div class="a" style="left:59px;top:535px;width:15px;height:111px;border:1px solid #93a3c0;border-radius:7px;background:#cbcbcb;overflow:hidden;box-shadow:inset 0 0 0 1px #f2f2f2;"><div class="a" style="left:0;top:0;width:13px;height:13px;background:#dcdcdc;border-bottom:1px solid #5a6f94"><div class="a tri" style="left:2.5px;top:4px;border-bottom:4px solid #5a6f94"></div></div><div class="a" style="left:0;top:13px;width:13px;height:1px;background:#f2f2f2"></div><div class="a" style="left:0;bottom:0;width:13px;height:13px;background:#dcdcdc;border-top:1px solid #f2f2f2;box-shadow:0 -1px 0 #5a6f94"><div class="a tri" style="left:2.5px;top:4px;border-top:4px solid #5a6f94"></div></div><div class="a" style="left:8px;top:45.5px;width:2px;height:2px;background:#fff;box-shadow:-1px 1px 0 #a9a9a9"></div><div class="a" style="left:3px;top:49.5px;width:2px;height:2px;background:#fff;box-shadow:-1px 1px 0 #a9a9a9"></div><div class="a" style="left:8px;top:53.5px;width:2px;height:2px;background:#fff;box-shadow:-1px 1px 0 #a9a9a9"></div><div class="a" style="left:3px;top:57.5px;width:2px;height:2px;background:#fff;box-shadow:-1px 1px 0 #a9a9a9"></div><div class="a" style="left:8px;top:61.5px;width:2px;height:2px;background:#fff;box-shadow:-1px 1px 0 #a9a9a9"></div></div>
<div class="a" style="left:791px;top:667px;width:351px;height:15px;background:#8a9bb9"></div><div class="a" style="left:792px;top:668px;width:349px;height:13px;border:1px solid;border-color:#fff #fff #cbcbcb #fff;border-radius:7px;background:#cbcbcb;overflow:hidden"><div class="a" style="left:0;top:0;width:13px;height:12px;background:#d3d3d3;border-right:1px solid #5a6f94"><div class="a" style="left:3px;top:1.5px;width:0;height:0;border-top:4px solid transparent;border-bottom:4px solid transparent;border-right:5px solid #5a6f94"></div></div><div class="a" style="left:14px;top:0;width:1px;height:12px;background:#f2f2f2"></div><div class="a" style="right:0;top:0;width:13px;height:12px;background:#d3d3d3;border-left:1px solid #f2f2f2;box-shadow:-1px 0 0 #5a6f94"><div class="a" style="left:4px;top:1.5px;width:0;height:0;border-top:4px solid transparent;border-bottom:4px solid transparent;border-left:5px solid #5a6f94"></div></div><div class="a" style="left:127px;top:2.5px;width:2px;height:2px;background:#fff;box-shadow:-1px 1px 0 #a9a9a9"></div><div class="a" style="left:123px;top:7.5px;width:2px;height:2px;background:#fff;box-shadow:-1px 1px 0 #a9a9a9"></div><div class="a" style="left:135px;top:2.5px;width:2px;height:2px;background:#fff;box-shadow:-1px 1px 0 #a9a9a9"></div><div class="a" style="left:131px;top:7.5px;width:2px;height:2px;background:#fff;box-shadow:-1px 1px 0 #a9a9a9"></div><div class="a" style="left:143px;top:2.5px;width:2px;height:2px;background:#fff;box-shadow:-1px 1px 0 #a9a9a9"></div><div class="a" style="left:139px;top:7.5px;width:2px;height:2px;background:#fff;box-shadow:-1px 1px 0 #a9a9a9"></div><div class="a" style="left:151px;top:2.5px;width:2px;height:2px;background:#fff;box-shadow:-1px 1px 0 #a9a9a9"></div><div class="a" style="left:147px;top:7.5px;width:2px;height:2px;background:#fff;box-shadow:-1px 1px 0 #a9a9a9"></div><div class="a" style="left:159px;top:2.5px;width:2px;height:2px;background:#fff;box-shadow:-1px 1px 0 #a9a9a9"></div><div class="a" style="left:155px;top:7.5px;width:2px;height:2px;background:#fff;box-shadow:-1px 1px 0 #a9a9a9"></div><div class="a" style="left:167px;top:2.5px;width:2px;height:2px;background:#fff;box-shadow:-1px 1px 0 #a9a9a9"></div><div class="a" style="left:163px;top:7.5px;width:2px;height:2px;background:#fff;box-shadow:-1px 1px 0 #a9a9a9"></div><div class="a" style="left:175px;top:2.5px;width:2px;height:2px;background:#fff;box-shadow:-1px 1px 0 #a9a9a9"></div><div class="a" style="left:171px;top:7.5px;width:2px;height:2px;background:#fff;box-shadow:-1px 1px 0 #a9a9a9"></div><div class="a" style="left:183px;top:2.5px;width:2px;height:2px;background:#fff;box-shadow:-1px 1px 0 #a9a9a9"></div><div class="a" style="left:179px;top:7.5px;width:2px;height:2px;background:#fff;box-shadow:-1px 1px 0 #a9a9a9"></div><div class="a" style="left:191px;top:2.5px;width:2px;height:2px;background:#fff;box-shadow:-1px 1px 0 #a9a9a9"></div><div class="a" style="left:187px;top:7.5px;width:2px;height:2px;background:#fff;box-shadow:-1px 1px 0 #a9a9a9"></div><div class="a" style="left:199px;top:2.5px;width:2px;height:2px;background:#fff;box-shadow:-1px 1px 0 #a9a9a9"></div><div class="a" style="left:195px;top:7.5px;width:2px;height:2px;background:#fff;box-shadow:-1px 1px 0 #a9a9a9"></div><div class="a" style="left:207px;top:2.5px;width:2px;height:2px;background:#fff;box-shadow:-1px 1px 0 #a9a9a9"></div><div class="a" style="left:203px;top:7.5px;width:2px;height:2px;background:#fff;box-shadow:-1px 1px 0 #a9a9a9"></div><div class="a" style="left:215px;top:2.5px;width:2px;height:2px;background:#fff;box-shadow:-1px 1px 0 #a9a9a9"></div><div class="a" style="left:211px;top:7.5px;width:2px;height:2px;background:#fff;box-shadow:-1px 1px 0 #a9a9a9"></div><div class="a" style="left:223px;top:2.5px;width:2px;height:2px;background:#fff;box-shadow:-1px 1px 0 #a9a9a9"></div><div class="a" style="left:219px;top:7.5px;width:2px;height:2px;background:#fff;box-shadow:-1px 1px 0 #a9a9a9"></div><div class="a" style="left:231px;top:2.5px;width:2px;height:2px;background:#fff;box-shadow:-1px 1px 0 #a9a9a9"></div><div class="a" style="left:227px;top:7.5px;width:2px;height:2px;background:#fff;box-shadow:-1px 1px 0 #a9a9a9"></div></div>
<div class="a" style="left:123px;top:493px;width:49px;height:38px;background:#fff;border-radius:3px 3px 5px 5px;box-shadow:1px 1px 0 #222"></div>
<div class="a" style="left:125px;top:495px;width:45px;height:18px;background:#0000ff;color:#fff;font-size:10.9px;line-height:21px;padding-left:2px">2</div>
<div class="a" style="left:125px;top:513px;width:45px;height:16px;color:#000;font-size:10.9px;line-height:19px;padding-left:2px">4</div>
<div class="a" style="left:69px;top:478px;width:133px;height:60px;border:4px solid #ff0000"></div>
<div class="a l" style="left:60px;top:667px;letter-spacing:0.143px;">Referent</div>
<div class="a f " style="left:113px;top:664px;width:170px;height:18px;line-height:16px;">Malkus Tomáš 167</div>
<div class="a btn dis" style="left:297px;top:664px;width:70px;height:19px;line-height:17px;">Z<u>a</u>okrouhlení</div>
<div class="a btn dis" style="left:373px;top:664px;width:70px;height:19px;line-height:17px;">Zá<u>l</u>oha</div>
<div class="a btn dis" style="left:448px;top:664px;width:70px;height:19px;line-height:17px;"><u>K</u>ontace</div>
<div class="a l" style="left:535px;top:667px;letter-spacing:-0.125px;">Měnit částky v Kč</div>
<div class="a cb" style="left:636px;top:667px"></div>
<svg class="a" style="left:636px;top:667px" width="12" height="12" viewBox="0 0 12 12"><path d="M3,5.6 L5.2,8.4 L9.6,2.6" fill="none" stroke="#8193b5" stroke-width="1.8"/></svg>
<div class="a" style="left:3px;top:698px;width:1152px;height:38px;border:1px solid #8d9db9;border-radius:9px;border-top-color:#5a5a5a"></div>
<div class="a" style="left:8px;top:717px;width:1140px;height:1px;background:#2b394f"></div>
<div class="a" style="left:1139px;top:700px;width:3px;height:17px;border-left:1px solid #8a8a8a;border-right:1px solid #2b394f"></div>
<div class="a st" style="left:13px;top:702px">Typ řádku faktury</div>
<div class="a st" style="left:9px;top:720px">Záznam: 1/1</div>
<div class="a st" style="left:231px;top:720px">...</div>
<div class="a st" style="left:411px;top:720px">&lt;OSC&gt;</div>
<div class="a" style="left:139px;top:720px;width:2px;height:13px;border-left:1px solid #2b394f;border-right:1px solid #9a9a9a"></div>
<div class="a" style="left:167px;top:720px;width:2px;height:13px;border-left:1px solid #2b394f;border-right:1px solid #9a9a9a"></div>
<div class="a" style="left:247px;top:720px;width:2px;height:13px;border-left:1px solid #2b394f;border-right:1px solid #9a9a9a"></div>
<div class="a" style="left:347px;top:720px;width:2px;height:13px;border-left:1px solid #2b394f;border-right:1px solid #9a9a9a"></div>
<div class="a" style="left:402px;top:720px;width:2px;height:13px;border-left:1px solid #2b394f;border-right:1px solid #9a9a9a"></div>
</body></html>
